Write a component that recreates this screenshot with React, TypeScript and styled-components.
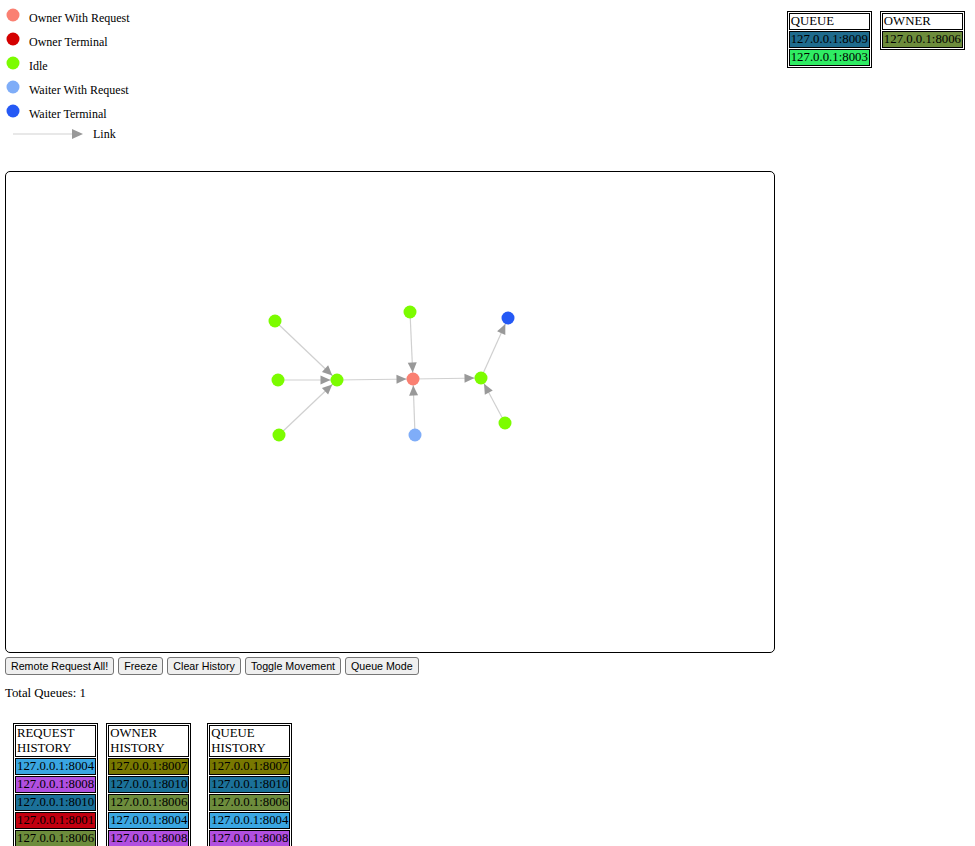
import React from "react";
import styled, { createGlobalStyle } from "styled-components";

const GlobalStyle = createGlobalStyle`
  html, body { margin: 0; padding: 0; background: #fff; }
  body { font-family: "Liberation Serif", "Times New Roman", serif; color: #000; }
`;

const Page = styled.div`
  width: 965px;
  display: flex;
  flex-direction: column;
`;

const Header = styled.div`
  display: flex;
  justify-content: space-between;
  align-items: flex-start;
  height: 171px;
`;

const LegendSvg = styled.svg`
  display: block;
  width: 200px;
  height: 150px;
`;

const TopTables = styled.div`
  display: flex;
  align-items: flex-start;
  gap: 8px;
  padding-top: 11px;
`;

const Table = styled.table`
  width: min-content;
  border: 1px solid #000;
  border-spacing: 1.5px 1px;
  font-family: "Liberation Serif", "Times New Roman", serif;
  font-size: 12.8px;
  line-height: 15px;
`;

const Cell = styled.td<{ $bg?: string }>`
  border: 1px solid #000;
  padding: 0 1px;
  background: ${(p) => p.$bg ?? "#fff"};
  text-align: left;
  white-space: ${(p) => (p.$bg ? "nowrap" : "normal")};
`;

const GraphBox = styled.div`
  margin-left: 5px;
  width: 770px;
  height: 482px;
  box-sizing: border-box;
  border: 1px solid #000;
  border-radius: 5px;
  overflow: hidden;
`;

const GraphSvg = styled.svg`
  display: block;
`;

const Buttons = styled.div`
  display: flex;
  gap: 4px;
  margin: 4px 0 0 5px;
`;

const Button = styled.button`
  height: 18px;
  padding: 0 5px;
  border: 1px solid #767676;
  border-radius: 3px;
  background: #efefef;
  font-family: "Liberation Sans", Arial, sans-serif;
  font-size: 10.67px;
  color: #000;
  line-height: 16px;
`;

const Total = styled.div`
  margin: 11px 0 0 5px;
  font-size: 12.8px;
  line-height: 15px;
`;

const History = styled.div`
  display: flex;
  align-items: flex-start;
  gap: 8px;
  margin: 22px 0 0 13px;
`;

const HistoryTable = styled(Table)<{ $extra?: number }>`
  margin-left: ${(p) => p.$extra ?? 0}px;
`;

const C = {
  p8009: "#1f6b8d",
  p8003: "#2fec63",
  p8006: "#6d8c3c",
  p8004: "#3aa6e2",
  p8008: "#b14fe0",
  p8010: "#1b7199",
  p8001: "#c2000f",
  p8007: "#787800",
};

const nodeColor: Record<string, string> = {
  owner: "#fa8072",
  ownerTerm: "#d40000",
  idle: "#7cfc00",
  waiterReq: "#7fadf8",
  waiterTerm: "#2559f5",
};

const legend = [
  ["owner", "Owner With Request"],
  ["ownerTerm", "Owner Terminal"],
  ["idle", "Idle"],
  ["waiterReq", "Waiter With Request"],
  ["waiterTerm", "Waiter Terminal"],
];

const nodes: Record<string, [number, number, string]> = {
  a: [275, 321, "idle"],
  b: [278, 380, "idle"],
  c: [279, 435, "idle"],
  h: [337, 380, "idle"],
  d: [410, 312, "idle"],
  o: [413, 379, "owner"],
  w: [415, 435, "waiterReq"],
  e: [481, 378, "idle"],
  f: [508, 318, "waiterTerm"],
  g: [505, 423, "idle"],
};

const edges: [string, string][] = [
  ["a", "h"],
  ["b", "h"],
  ["c", "h"],
  ["h", "o"],
  ["d", "o"],
  ["w", "o"],
  ["o", "e"],
  ["e", "f"],
  ["g", "e"],
];

const R = 6.5;

function arrow(sx: number, sy: number, tx: number, ty: number) {
  const dx = tx - sx;
  const dy = ty - sy;
  const len = Math.hypot(dx, dy);
  const ux = dx / len;
  const uy = dy / len;
  const tipX = tx - ux * R;
  const tipY = ty - uy * R;
  const bx = tipX - ux * 10;
  const by = tipY - uy * 10;
  const px = -uy * 4.5;
  const py = ux * 4.5;
  return `${tipX},${tipY} ${bx + px},${by + py} ${bx - px},${by - py}`;
}

const Legend = () => (
  <LegendSvg>
    {legend.map(([k, label], i) => (
      <g key={k}>
        <circle cx={13} cy={15 + i * 24} r={6.5} fill={nodeColor[k]} />
        <text
          x={29}
          y={21.5 + i * 24}
          fontSize={12}
          fontFamily='"Liberation Serif", "Times New Roman", serif'
        >
          {label}
        </text>
      </g>
    ))}
    <line x1={13} y1={134} x2={73} y2={134} stroke="#e0e0e0" strokeWidth={1.5} />
    <polygon points="72,129 83,134 72,139" fill="#999" />
    <text
      x={93}
      y={138}
      fontSize={12}
      fontFamily='"Liberation Serif", "Times New Roman", serif'
    >
      Link
    </text>
  </LegendSvg>
);

const Graph = () => (
  <GraphSvg width={768} height={480} viewBox="6 172 768 480">
    {edges.map(([s, t]) => {
      const [sx, sy] = nodes[s];
      const [tx, ty] = nodes[t];
      return (
        <line
          key={s + t}
          x1={sx}
          y1={sy}
          x2={tx}
          y2={ty}
          stroke="#d0d0d0"
          strokeWidth={1.2}
        />
      );
    })}
    {edges.map(([s, t]) => {
      const [sx, sy] = nodes[s];
      const [tx, ty] = nodes[t];
      return <polygon key={"a" + s + t} points={arrow(sx, sy, tx, ty)} fill="#999" />;
    })}
    {Object.entries(nodes).map(([k, [x, y, type]]) => (
      <circle key={k} cx={x} cy={y} r={R} fill={nodeColor[type]} />
    ))}
  </GraphSvg>
);

const DataTable = ({
  title,
  rows,
  extra,
}: {
  title: string;
  rows: string[][];
  extra?: number;
}) => (
  <HistoryTable $extra={extra}>
    <tbody>
      <tr>
        <Cell>{title}</Cell>
      </tr>
      {rows.map(([addr, bg], i) => (
        <tr key={i}>
          <Cell $bg={bg}>{addr}</Cell>
        </tr>
      ))}
    </tbody>
  </HistoryTable>
);

export default function App() {
  return (
    <>
      <GlobalStyle />
      <Page>
        <Header>
          <Legend />
          <TopTables>
            <DataTable
              title="QUEUE"
              rows={[
                ["127.0.0.1:8009", C.p8009],
                ["127.0.0.1:8003", C.p8003],
              ]}
            />
            <DataTable title="OWNER" rows={[["127.0.0.1:8006", C.p8006]]} />
          </TopTables>
        </Header>
        <GraphBox>
          <Graph />
        </GraphBox>
        <Buttons>
          <Button>Remote Request All!</Button>
          <Button>Freeze</Button>
          <Button>Clear History</Button>
          <Button>Toggle Movement</Button>
          <Button>Queue Mode</Button>
        </Buttons>
        <Total>Total Queues: 1</Total>
        <History>
          <DataTable
            title="REQUEST HISTORY"
            rows={[
              ["127.0.0.1:8004", C.p8004],
              ["127.0.0.1:8008", C.p8008],
              ["127.0.0.1:8010", C.p8010],
              ["127.0.0.1:8001", C.p8001],
              ["127.0.0.1:8006", C.p8006],
            ]}
          />
          <DataTable
            title="OWNER HISTORY"
            rows={[
              ["127.0.0.1:8007", C.p8007],
              ["127.0.0.1:8010", C.p8010],
              ["127.0.0.1:8006", C.p8006],
              ["127.0.0.1:8004", C.p8004],
              ["127.0.0.1:8008", C.p8008],
            ]}
          />
          <DataTable
            title="QUEUE HISTORY"
            extra={8}
            rows={[
              ["127.0.0.1:8007", C.p8007],
              ["127.0.0.1:8010", C.p8010],
              ["127.0.0.1:8006", C.p8006],
              ["127.0.0.1:8004", C.p8004],
              ["127.0.0.1:8008", C.p8008],
            ]}
          />
        </History>
      </Page>
    </>
  );
}
